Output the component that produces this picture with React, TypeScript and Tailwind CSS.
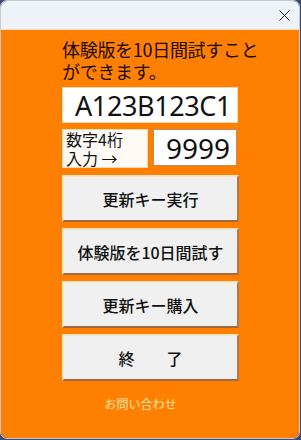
const jp = { fontFamily: '"Noto Sans CJK JP", "Noto Sans", sans-serif' };
const latin = { fontFamily: '"Noto Sans", "Open Sans", sans-serif' };

const buttons = ["更新キー実行", "体験版を10日間試す", "更新キー購入", "終　　了"];

export default function App() {
  return (
    <div className="h-[440px] w-[301px] bg-[#3a4a7a]">
      <div className="flex h-[439px] w-[300px] flex-col overflow-hidden rounded-[7px] border border-[#c9c9c9]">
        <div className="flex h-[29px] shrink-0 items-center justify-end border-b border-[#f4dcbc] bg-[#eef3f9] pr-[9px]">
          <svg width="11" height="11" viewBox="0 0 11 11" className="mt-[1px]">
            <path d="M0.5 0.5 L10.5 10.5 M10.5 0.5 L0.5 10.5" stroke="#222" strokeWidth="1" />
          </svg>
        </div>
        <div className="flex flex-1 flex-col bg-[#ff8000] pl-[61px]">
          <p className="mt-[8px] w-[220px] text-[18px] leading-[22px] tracking-[-0.3px] text-[#1a0800]" style={jp}>
            <span className="block">体験版を10日間試すこと</span>
            <span className="block">ができます。</span>
          </p>
          <div className="mt-[5px] flex h-[36px] w-[176px] items-center border border-[#f7d9b0] bg-white pl-[12px]">
            <span className="text-[27px] leading-none tracking-[-0.4px] text-[#111]" style={latin}>
              A123B123C1
            </span>
          </div>
          <div className="mt-[6px] flex gap-[5px]">
            <div className="flex h-[39px] w-[86px] flex-col justify-center border border-[#f7d9b0] bg-[#fffaf3] pl-[3px] text-[16px] leading-[19px] text-[#111]" style={jp}>
              <span>数字4桁</span>
              <span>入力 →</span>
            </div>
            <div className="flex h-[37px] w-[84px] items-center justify-end border border-[#c8895a] bg-white pr-[6px]">
              <span className="text-[28px] leading-none text-[#111]" style={latin}>
                9999
              </span>
            </div>
          </div>
          <div className="mt-[7px] flex flex-col gap-[6px]">
            {buttons.map((b) => (
              <div
                key={b}
                className="flex h-[47px] w-[177px] items-center justify-center border-2 border-t-[#fbe4c4] border-l-[#fbe4c4] border-r-[#b07a50] border-b-[#a06a40] bg-[#f0f0f0] text-[16px] font-medium text-[#111]"
                style={jp}
              >
                {b}
              </div>
            ))}
          </div>
          <p className="mt-[14px] w-[157px] text-center text-[12px] text-[#ffe2a8]" style={jp}>
            お問い合わせ
          </p>
        </div>
      </div>
    </div>
  );
}
